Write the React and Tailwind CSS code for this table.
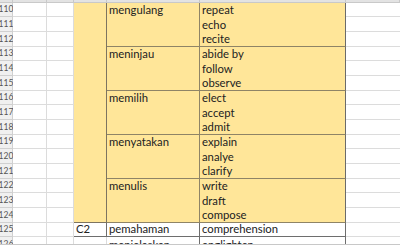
import React from "react";

const nums = Array.from({ length: 17 }, (_, i) => 110 + i);

const groups = [
  { d: "mengulang", e: ["repeat", "echo", "recite"] },
  { d: "meninjau", e: ["abide by", "follow", "observe"] },
  { d: "memilih", e: ["elect", "accept", "admit"] },
  { d: "menyatakan", e: ["explain", "analye", "clarify"] },
  { d: "menulis", e: ["write", "draft", "compose"] },
];

const rowStart = [
  "row-start-2", "row-start-3", "row-start-4", "row-start-5", "row-start-6", "row-start-7",
  "row-start-8", "row-start-9", "row-start-10", "row-start-11", "row-start-12", "row-start-13",
  "row-start-14", "row-start-15", "row-start-16", "row-start-17", "row-start-18",
];

function Txt({ children, className = "" }) {
  return (
    <div className={`flex items-end overflow-hidden whitespace-nowrap pl-[2px] text-[11.3px] leading-[14px] text-[#222] ${className}`}>
      {children}
    </div>
  );
}

export default function App() {
  const cells = [];
  const hdrCols = ["col-start-1", "col-start-2", "col-start-3", "col-start-4", "col-start-5", "col-start-6", "col-start-7"];
  hdrCols.forEach((c, i) =>
    cells.push(
      <div key={"h" + i} className={`${c} row-start-1 bg-[#e3e3e3] border-b border-r border-[#c9c9c9]`} />
    )
  );
  nums.forEach((n, i) => {
    const r = rowStart[i];
    cells.push(
      <div key={"n" + n} className={`col-start-1 ${r} flex items-center justify-center bg-[#f0f0f0] border-b border-r border-[#d0d0d0] text-[8.5px] text-[#555]`}>
        {n}
      </div>
    );
    cells.push(<div key={"a" + n} className={`col-start-2 ${r} border-b border-r border-[#dcdcdc] bg-white`} />);
    cells.push(<div key={"b" + n} className={`col-start-3 ${r} border-b border-r border-[#dcdcdc] bg-white`} />);
    cells.push(<div key={"f" + n} className={`col-start-7 ${r} border-b border-[#dcdcdc] bg-white`} />);
  });
  cells.push(<div key="cm" className="col-start-4 row-start-2 row-span-15 bg-[#ffe699] border-r border-b border-[#7d7460]" />);
  groups.forEach((g, gi) => {
    const base = gi * 3;
    cells.push(
      <div key={"d" + gi} className={`col-start-5 ${rowStart[base]} row-span-3 bg-[#ffe699] border-b border-r border-[#8f8466] flex flex-col`}>
        <Txt className="h-[14px] shrink-0">{g.d}</Txt>
      </div>
    );
    g.e.forEach((w, k) => {
      cells.push(
        <Txt key={"e" + gi + k} className={`col-start-6 ${rowStart[base + k]} bg-[#ffe699] border-r border-[#6b6b6b] ${k === 2 ? "border-b border-b-[#8f8466]" : ""}`}>
          {w}
        </Txt>
      );
    });
  });
  cells.push(<Txt key="c125" className="col-start-4 row-start-17 bg-white border-r border-b border-[#6e6e6e]">C2</Txt>);
  cells.push(<Txt key="d125" className="col-start-5 row-start-17 bg-white border-r border-b border-[#6e6e6e]">pemahaman</Txt>);
  cells.push(<Txt key="e125" className="col-start-6 row-start-17 bg-white border-r border-b border-[#6e6e6e]">comprehension</Txt>);
  cells.push(<div key="c126" className="col-start-4 row-start-18 bg-white border-r border-b border-[#dcdcdc]" />);
  cells.push(<Txt key="d126" className="col-start-5 row-start-18 bg-white border-r border-[#6e6e6e]">menjelaskan</Txt>);
  cells.push(<Txt key="e126" className="col-start-6 row-start-18 bg-white border-r border-[#6e6e6e]">englighten</Txt>);

  return (
    <div className="relative w-[400px] h-[248px] overflow-hidden bg-white" style={{ fontFamily: "Lato, 'Open Sans', sans-serif" }}>
      <div className="grid grid-cols-[13px_34px_27px_33px_93px_146px_54px] grid-rows-[3px_14px_15px_15px_14px_15px_15px_14px_15px_15px_14px_15px_15px_14px_15px_15px_14px_15px]">
        {cells}
      </div>
      <div className="absolute left-0 right-0 bottom-0 h-[4px] bg-white border-t border-[#c8c8c8]" />
    </div>
  );
}
